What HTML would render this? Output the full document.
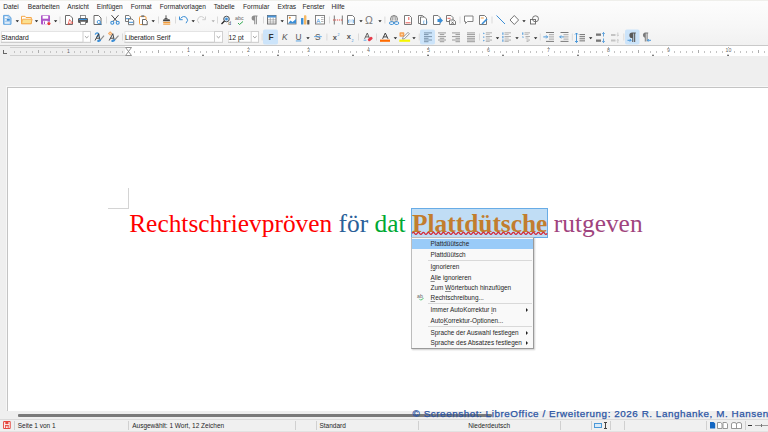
<!DOCTYPE html><html><head><meta charset="utf-8"><style>
*{margin:0;padding:0;box-sizing:border-box}
html,body{width:768px;height:432px;overflow:hidden;background:#efefef;position:relative;font-family:'Liberation Sans',sans-serif}
.abs{position:absolute}
.t{position:absolute;white-space:nowrap;color:#262626;font-size:6.4px;line-height:8px}
svg{position:absolute;overflow:visible}
.sep{position:absolute;width:1px;background:#d6d6d6}
u{text-decoration-color:#8a8a8a;text-decoration-thickness:0.6px;text-underline-offset:0.8px}
</style></head><body>

<div class="abs" style="left:0;top:0;width:768px;height:45px;background:linear-gradient(#fdfdfd,#f7f7f7 60%,#f1f1f1)"></div>
<div class="abs" style="left:0;top:0;width:768px;height:1px;background:#efefeb"></div>
<div class="t" style="left:3.3px;top:2.6px;font-size:6.58px">Datei</div>
<div class="t" style="left:27.8px;top:2.6px;font-size:6.58px">Bearbeiten</div>
<div class="t" style="left:67.3px;top:2.6px;font-size:6.58px">Ansicht</div>
<div class="t" style="left:96.8px;top:2.6px;font-size:6.58px">Einfügen</div>
<div class="t" style="left:130.8px;top:2.6px;font-size:6.58px">Format</div>
<div class="t" style="left:159.8px;top:2.6px;font-size:6.58px">Formatvorlagen</div>
<div class="t" style="left:213.8px;top:2.6px;font-size:6.58px">Tabelle</div>
<div class="t" style="left:243.10000000000002px;top:2.6px;font-size:6.58px">Formular</div>
<div class="t" style="left:277.5px;top:2.6px;font-size:6.58px">Extras</div>
<div class="t" style="left:302.5px;top:2.6px;font-size:6.58px">Fenster</div>
<div class="t" style="left:331.6px;top:2.6px;font-size:6.58px">Hilfe</div>
<div class="abs" style="left:0;top:45px;width:768px;height:1px;background:#c9c9c9"></div>
<div class="abs" style="left:0;top:46px;width:768px;height:10px;background:#efefef"></div>
<div class="abs" style="left:10px;top:47px;width:115px;height:9px;background:#efefef;border-top:1px solid #d0d0d0;border-bottom:1px solid #d0d0d0"></div>
<div class="abs" style="left:125px;top:46px;width:643px;height:10px;background:#fff"></div>
<div class="abs" style="left:14px;top:50.5px;width:1px;height:2px;background:#c4c4c4"></div><div class="abs" style="left:20px;top:50.5px;width:1px;height:2px;background:#c4c4c4"></div><div class="abs" style="left:26px;top:50.5px;width:1px;height:2px;background:#c4c4c4"></div><div class="abs" style="left:32px;top:50.5px;width:1px;height:2px;background:#c4c4c4"></div><div class="abs" style="left:38px;top:50px;width:1px;height:3px;background:#acacac"></div><div class="abs" style="left:44px;top:50.5px;width:1px;height:2px;background:#c4c4c4"></div><div class="abs" style="left:50px;top:50.5px;width:1px;height:2px;background:#c4c4c4"></div><div class="abs" style="left:56px;top:50.5px;width:1px;height:2px;background:#c4c4c4"></div><div class="abs" style="left:62px;top:50.5px;width:1px;height:2px;background:#c4c4c4"></div><div class="abs" style="left:74px;top:50.5px;width:1px;height:2px;background:#c4c4c4"></div><div class="abs" style="left:80px;top:50.5px;width:1px;height:2px;background:#c4c4c4"></div><div class="abs" style="left:86px;top:50.5px;width:1px;height:2px;background:#c4c4c4"></div><div class="abs" style="left:92px;top:50.5px;width:1px;height:2px;background:#c4c4c4"></div><div class="abs" style="left:98px;top:50px;width:1px;height:3px;background:#acacac"></div><div class="abs" style="left:104px;top:50.5px;width:1px;height:2px;background:#c4c4c4"></div><div class="abs" style="left:110px;top:50.5px;width:1px;height:2px;background:#c4c4c4"></div><div class="abs" style="left:116px;top:50.5px;width:1px;height:2px;background:#c4c4c4"></div><div class="abs" style="left:122px;top:50.5px;width:1px;height:2px;background:#c4c4c4"></div><div class="abs" style="left:134px;top:50.5px;width:1px;height:2px;background:#c4c4c4"></div><div class="abs" style="left:140px;top:50.5px;width:1px;height:2px;background:#c4c4c4"></div><div class="abs" style="left:146px;top:50.5px;width:1px;height:2px;background:#c4c4c4"></div><div class="abs" style="left:152px;top:50.5px;width:1px;height:2px;background:#c4c4c4"></div><div class="abs" style="left:158px;top:50px;width:1px;height:3px;background:#acacac"></div><div class="abs" style="left:164px;top:50.5px;width:1px;height:2px;background:#c4c4c4"></div><div class="abs" style="left:170px;top:50.5px;width:1px;height:2px;background:#c4c4c4"></div><div class="abs" style="left:176px;top:50.5px;width:1px;height:2px;background:#c4c4c4"></div><div class="abs" style="left:182px;top:50.5px;width:1px;height:2px;background:#c4c4c4"></div><div class="abs" style="left:194px;top:50.5px;width:1px;height:2px;background:#c4c4c4"></div><div class="abs" style="left:200px;top:50.5px;width:1px;height:2px;background:#c4c4c4"></div><div class="abs" style="left:206px;top:50.5px;width:1px;height:2px;background:#c4c4c4"></div><div class="abs" style="left:212px;top:50.5px;width:1px;height:2px;background:#c4c4c4"></div><div class="abs" style="left:218px;top:50px;width:1px;height:3px;background:#acacac"></div><div class="abs" style="left:224px;top:50.5px;width:1px;height:2px;background:#c4c4c4"></div><div class="abs" style="left:230px;top:50.5px;width:1px;height:2px;background:#c4c4c4"></div><div class="abs" style="left:236px;top:50.5px;width:1px;height:2px;background:#c4c4c4"></div><div class="abs" style="left:242px;top:50.5px;width:1px;height:2px;background:#c4c4c4"></div><div class="abs" style="left:254px;top:50.5px;width:1px;height:2px;background:#c4c4c4"></div><div class="abs" style="left:260px;top:50.5px;width:1px;height:2px;background:#c4c4c4"></div><div class="abs" style="left:266px;top:50.5px;width:1px;height:2px;background:#c4c4c4"></div><div class="abs" style="left:272px;top:50.5px;width:1px;height:2px;background:#c4c4c4"></div><div class="abs" style="left:278px;top:50px;width:1px;height:3px;background:#acacac"></div><div class="abs" style="left:284px;top:50.5px;width:1px;height:2px;background:#c4c4c4"></div><div class="abs" style="left:290px;top:50.5px;width:1px;height:2px;background:#c4c4c4"></div><div class="abs" style="left:296px;top:50.5px;width:1px;height:2px;background:#c4c4c4"></div><div class="abs" style="left:302px;top:50.5px;width:1px;height:2px;background:#c4c4c4"></div><div class="abs" style="left:314px;top:50.5px;width:1px;height:2px;background:#c4c4c4"></div><div class="abs" style="left:320px;top:50.5px;width:1px;height:2px;background:#c4c4c4"></div><div class="abs" style="left:326px;top:50.5px;width:1px;height:2px;background:#c4c4c4"></div><div class="abs" style="left:332px;top:50.5px;width:1px;height:2px;background:#c4c4c4"></div><div class="abs" style="left:338px;top:50px;width:1px;height:3px;background:#acacac"></div><div class="abs" style="left:344px;top:50.5px;width:1px;height:2px;background:#c4c4c4"></div><div class="abs" style="left:350px;top:50.5px;width:1px;height:2px;background:#c4c4c4"></div><div class="abs" style="left:356px;top:50.5px;width:1px;height:2px;background:#c4c4c4"></div><div class="abs" style="left:362px;top:50.5px;width:1px;height:2px;background:#c4c4c4"></div><div class="abs" style="left:374px;top:50.5px;width:1px;height:2px;background:#c4c4c4"></div><div class="abs" style="left:380px;top:50.5px;width:1px;height:2px;background:#c4c4c4"></div><div class="abs" style="left:386px;top:50.5px;width:1px;height:2px;background:#c4c4c4"></div><div class="abs" style="left:392px;top:50.5px;width:1px;height:2px;background:#c4c4c4"></div><div class="abs" style="left:398px;top:50px;width:1px;height:3px;background:#acacac"></div><div class="abs" style="left:404px;top:50.5px;width:1px;height:2px;background:#c4c4c4"></div><div class="abs" style="left:410px;top:50.5px;width:1px;height:2px;background:#c4c4c4"></div><div class="abs" style="left:416px;top:50.5px;width:1px;height:2px;background:#c4c4c4"></div><div class="abs" style="left:422px;top:50.5px;width:1px;height:2px;background:#c4c4c4"></div><div class="abs" style="left:434px;top:50.5px;width:1px;height:2px;background:#c4c4c4"></div><div class="abs" style="left:440px;top:50.5px;width:1px;height:2px;background:#c4c4c4"></div><div class="abs" style="left:446px;top:50.5px;width:1px;height:2px;background:#c4c4c4"></div><div class="abs" style="left:452px;top:50.5px;width:1px;height:2px;background:#c4c4c4"></div><div class="abs" style="left:458px;top:50px;width:1px;height:3px;background:#acacac"></div><div class="abs" style="left:464px;top:50.5px;width:1px;height:2px;background:#c4c4c4"></div><div class="abs" style="left:470px;top:50.5px;width:1px;height:2px;background:#c4c4c4"></div><div class="abs" style="left:476px;top:50.5px;width:1px;height:2px;background:#c4c4c4"></div><div class="abs" style="left:482px;top:50.5px;width:1px;height:2px;background:#c4c4c4"></div><div class="abs" style="left:494px;top:50.5px;width:1px;height:2px;background:#c4c4c4"></div><div class="abs" style="left:500px;top:50.5px;width:1px;height:2px;background:#c4c4c4"></div><div class="abs" style="left:506px;top:50.5px;width:1px;height:2px;background:#c4c4c4"></div><div class="abs" style="left:512px;top:50.5px;width:1px;height:2px;background:#c4c4c4"></div><div class="abs" style="left:518px;top:50px;width:1px;height:3px;background:#acacac"></div><div class="abs" style="left:524px;top:50.5px;width:1px;height:2px;background:#c4c4c4"></div><div class="abs" style="left:530px;top:50.5px;width:1px;height:2px;background:#c4c4c4"></div><div class="abs" style="left:536px;top:50.5px;width:1px;height:2px;background:#c4c4c4"></div><div class="abs" style="left:542px;top:50.5px;width:1px;height:2px;background:#c4c4c4"></div><div class="abs" style="left:554px;top:50.5px;width:1px;height:2px;background:#c4c4c4"></div><div class="abs" style="left:560px;top:50.5px;width:1px;height:2px;background:#c4c4c4"></div><div class="abs" style="left:566px;top:50.5px;width:1px;height:2px;background:#c4c4c4"></div><div class="abs" style="left:572px;top:50.5px;width:1px;height:2px;background:#c4c4c4"></div><div class="abs" style="left:578px;top:50px;width:1px;height:3px;background:#acacac"></div><div class="abs" style="left:584px;top:50.5px;width:1px;height:2px;background:#c4c4c4"></div><div class="abs" style="left:590px;top:50.5px;width:1px;height:2px;background:#c4c4c4"></div><div class="abs" style="left:596px;top:50.5px;width:1px;height:2px;background:#c4c4c4"></div><div class="abs" style="left:602px;top:50.5px;width:1px;height:2px;background:#c4c4c4"></div><div class="abs" style="left:614px;top:50.5px;width:1px;height:2px;background:#c4c4c4"></div><div class="abs" style="left:620px;top:50.5px;width:1px;height:2px;background:#c4c4c4"></div><div class="abs" style="left:626px;top:50.5px;width:1px;height:2px;background:#c4c4c4"></div><div class="abs" style="left:632px;top:50.5px;width:1px;height:2px;background:#c4c4c4"></div><div class="abs" style="left:638px;top:50px;width:1px;height:3px;background:#acacac"></div><div class="abs" style="left:644px;top:50.5px;width:1px;height:2px;background:#c4c4c4"></div><div class="abs" style="left:650px;top:50.5px;width:1px;height:2px;background:#c4c4c4"></div><div class="abs" style="left:656px;top:50.5px;width:1px;height:2px;background:#c4c4c4"></div><div class="abs" style="left:662px;top:50.5px;width:1px;height:2px;background:#c4c4c4"></div><div class="abs" style="left:674px;top:50.5px;width:1px;height:2px;background:#c4c4c4"></div><div class="abs" style="left:680px;top:50.5px;width:1px;height:2px;background:#c4c4c4"></div><div class="abs" style="left:686px;top:50.5px;width:1px;height:2px;background:#c4c4c4"></div><div class="abs" style="left:692px;top:50.5px;width:1px;height:2px;background:#c4c4c4"></div><div class="abs" style="left:698px;top:50px;width:1px;height:3px;background:#acacac"></div><div class="abs" style="left:704px;top:50.5px;width:1px;height:2px;background:#c4c4c4"></div><div class="abs" style="left:710px;top:50.5px;width:1px;height:2px;background:#c4c4c4"></div><div class="abs" style="left:716px;top:50.5px;width:1px;height:2px;background:#c4c4c4"></div><div class="abs" style="left:722px;top:50.5px;width:1px;height:2px;background:#c4c4c4"></div><div class="abs" style="left:734px;top:50.5px;width:1px;height:2px;background:#c4c4c4"></div><div class="abs" style="left:740px;top:50.5px;width:1px;height:2px;background:#c4c4c4"></div><div class="abs" style="left:746px;top:50.5px;width:1px;height:2px;background:#c4c4c4"></div><div class="abs" style="left:752px;top:50.5px;width:1px;height:2px;background:#c4c4c4"></div><div class="abs" style="left:758px;top:50px;width:1px;height:3px;background:#acacac"></div><div class="abs" style="left:764px;top:50.5px;width:1px;height:2px;background:#c4c4c4"></div>
<div class="abs" style="left:185.5px;top:47px;width:6px;text-align:center;font-size:5.2px;line-height:6px;color:#666">1</div><div class="abs" style="left:188px;top:47px;width:1px;height:1px;background:#b0b0b0"></div><div class="abs" style="left:188px;top:55px;width:1px;height:1px;background:#b0b0b0"></div>
<div class="abs" style="left:245.5px;top:47px;width:6px;text-align:center;font-size:5.2px;line-height:6px;color:#666">2</div><div class="abs" style="left:248px;top:47px;width:1px;height:1px;background:#b0b0b0"></div><div class="abs" style="left:248px;top:55px;width:1px;height:1px;background:#b0b0b0"></div>
<div class="abs" style="left:305.5px;top:47px;width:6px;text-align:center;font-size:5.2px;line-height:6px;color:#666">3</div><div class="abs" style="left:308px;top:47px;width:1px;height:1px;background:#b0b0b0"></div><div class="abs" style="left:308px;top:55px;width:1px;height:1px;background:#b0b0b0"></div>
<div class="abs" style="left:365.5px;top:47px;width:6px;text-align:center;font-size:5.2px;line-height:6px;color:#666">4</div><div class="abs" style="left:368px;top:47px;width:1px;height:1px;background:#b0b0b0"></div><div class="abs" style="left:368px;top:55px;width:1px;height:1px;background:#b0b0b0"></div>
<div class="abs" style="left:425.5px;top:47px;width:6px;text-align:center;font-size:5.2px;line-height:6px;color:#666">5</div><div class="abs" style="left:428px;top:47px;width:1px;height:1px;background:#b0b0b0"></div><div class="abs" style="left:428px;top:55px;width:1px;height:1px;background:#b0b0b0"></div>
<div class="abs" style="left:485.5px;top:47px;width:6px;text-align:center;font-size:5.2px;line-height:6px;color:#666">6</div><div class="abs" style="left:488px;top:47px;width:1px;height:1px;background:#b0b0b0"></div><div class="abs" style="left:488px;top:55px;width:1px;height:1px;background:#b0b0b0"></div>
<div class="abs" style="left:545.5px;top:47px;width:6px;text-align:center;font-size:5.2px;line-height:6px;color:#666">7</div><div class="abs" style="left:548px;top:47px;width:1px;height:1px;background:#b0b0b0"></div><div class="abs" style="left:548px;top:55px;width:1px;height:1px;background:#b0b0b0"></div>
<div class="abs" style="left:605.5px;top:47px;width:6px;text-align:center;font-size:5.2px;line-height:6px;color:#666">8</div><div class="abs" style="left:608px;top:47px;width:1px;height:1px;background:#b0b0b0"></div><div class="abs" style="left:608px;top:55px;width:1px;height:1px;background:#b0b0b0"></div>
<div class="abs" style="left:665.5px;top:47px;width:6px;text-align:center;font-size:5.2px;line-height:6px;color:#666">9</div><div class="abs" style="left:668px;top:47px;width:1px;height:1px;background:#b0b0b0"></div><div class="abs" style="left:668px;top:55px;width:1px;height:1px;background:#b0b0b0"></div>
<div class="abs" style="left:725.5px;top:47px;width:6px;text-align:center;font-size:5.2px;line-height:6px;color:#666">10</div><div class="abs" style="left:728px;top:47px;width:1px;height:1px;background:#b0b0b0"></div><div class="abs" style="left:728px;top:55px;width:1px;height:1px;background:#b0b0b0"></div>
<div class="abs" style="left:66px;top:47.5px;width:5px;text-align:center;font-size:5px;line-height:6px;color:#666">1</div>
<div class="abs" style="left:202px;top:54px;width:0;height:0;border-left:1.5px solid transparent;border-right:1.5px solid transparent;border-bottom:2px solid #555"></div>
<div class="abs" style="left:277px;top:54px;width:0;height:0;border-left:1.5px solid transparent;border-right:1.5px solid transparent;border-bottom:2px solid #555"></div>
<div class="abs" style="left:352px;top:54px;width:0;height:0;border-left:1.5px solid transparent;border-right:1.5px solid transparent;border-bottom:2px solid #555"></div>
<div class="abs" style="left:427px;top:54px;width:0;height:0;border-left:1.5px solid transparent;border-right:1.5px solid transparent;border-bottom:2px solid #555"></div>
<div class="abs" style="left:502px;top:54px;width:0;height:0;border-left:1.5px solid transparent;border-right:1.5px solid transparent;border-bottom:2px solid #555"></div>
<div class="abs" style="left:577px;top:54px;width:0;height:0;border-left:1.5px solid transparent;border-right:1.5px solid transparent;border-bottom:2px solid #555"></div>
<div class="abs" style="left:652px;top:54px;width:0;height:0;border-left:1.5px solid transparent;border-right:1.5px solid transparent;border-bottom:2px solid #555"></div>
<div class="abs" style="left:727px;top:54px;width:0;height:0;border-left:1.5px solid transparent;border-right:1.5px solid transparent;border-bottom:2px solid #555"></div>
<div class="abs" style="left:3px;top:50px;width:3.5px;height:3.5px;border-left:1.2px solid #666;border-bottom:1.2px solid #666"></div>
<svg style="left:125px;top:47px" width="7" height="9" viewBox="0 0 7 9"><path d="M0.5 0.5H6.5L3.5 4.5Z M0.5 8.5H6.5L3.5 4.5Z" fill="#fff" stroke="#777" stroke-width="0.8"/></svg>
<div class="abs" style="left:7px;top:87px;width:770px;height:324px;background:#fff;border-left:1px solid #c4c4c4;border-top:1px solid #c4c4c4;box-shadow:-1px -1px 0 #f7f7f7"></div>
<div class="abs" style="left:108px;top:187.5px;width:21px;height:21px;border-right:1px solid #d4d4d4;border-bottom:1px solid #d4d4d4"></div>
<div class="abs" style="left:411px;top:208px;width:137px;height:30px;background:#c0ddf5;border:1px solid #68ace6"></div>
<div class="abs" id="doc" style="left:129.2px;top:208px;font-family:'Liberation Serif',serif;font-size:25.4px;line-height:30px;white-space:nowrap"><span style="color:#ff0000">Rechtschrievpröven</span> <span style="color:#2a6099">för</span> <span style="color:#00a933">dat</span> <span style="color:#c27d2e;font-weight:bold">Plattdütsche</span> <span style="color:#a0447e">rutgeven</span></div>
<svg style="left:0;top:0" width="768" height="432"><path d="M412.15 233.4 Q413.40 231.2 414.65 233.4 Q415.90 235.6 417.15 233.4 Q418.40 231.2 419.65 233.4 Q420.90 235.6 422.15 233.4 Q423.40 231.2 424.65 233.4 Q425.90 235.6 427.15 233.4 Q428.40 231.2 429.65 233.4 Q430.90 235.6 432.15 233.4 Q433.40 231.2 434.65 233.4 Q435.90 235.6 437.15 233.4 Q438.40 231.2 439.65 233.4 Q440.90 235.6 442.15 233.4 Q443.40 231.2 444.65 233.4 Q445.90 235.6 447.15 233.4 Q448.40 231.2 449.65 233.4 Q450.90 235.6 452.15 233.4 Q453.40 231.2 454.65 233.4 Q455.90 235.6 457.15 233.4 Q458.40 231.2 459.65 233.4 Q460.90 235.6 462.15 233.4 Q463.40 231.2 464.65 233.4 Q465.90 235.6 467.15 233.4 Q468.40 231.2 469.65 233.4 Q470.90 235.6 472.15 233.4 Q473.40 231.2 474.65 233.4 Q475.90 235.6 477.15 233.4 Q478.40 231.2 479.65 233.4 Q480.90 235.6 482.15 233.4 Q483.40 231.2 484.65 233.4 Q485.90 235.6 487.15 233.4 Q488.40 231.2 489.65 233.4 Q490.90 235.6 492.15 233.4 Q493.40 231.2 494.65 233.4 Q495.90 235.6 497.15 233.4 Q498.40 231.2 499.65 233.4 Q500.90 235.6 502.15 233.4 Q503.40 231.2 504.65 233.4 Q505.90 235.6 507.15 233.4 Q508.40 231.2 509.65 233.4 Q510.90 235.6 512.15 233.4 Q513.40 231.2 514.65 233.4 Q515.90 235.6 517.15 233.4 Q518.40 231.2 519.65 233.4 Q520.90 235.6 522.15 233.4 Q523.40 231.2 524.65 233.4 Q525.90 235.6 527.15 233.4 Q528.40 231.2 529.65 233.4 Q530.90 235.6 532.15 233.4 Q533.40 231.2 534.65 233.4 Q535.90 235.6 537.15 233.4 Q538.40 231.2 539.65 233.4 Q540.90 235.6 542.15 233.4 Q543.40 231.2 544.65 233.4 Q545.90 235.6 547.15 233.4" fill="none" stroke="#d42a3a" stroke-width="1.2"/></svg>
<div class="abs" style="left:411px;top:237px;width:123px;height:112.2px;background:#f9f9f9;border:1px solid #bdbdbd;border-right-color:#9a9a9a;border-bottom-color:#9a9a9a;box-shadow:1px 1px 1.5px rgba(0,0,0,0.2)"></div>
<div class="abs" style="left:412px;top:238.8px;width:121px;height:10.1px;background:#99cbf8"></div>
<div class="t" style="left:430.5px;top:240.4px;color:#262626">Plattdüütsche</div>
<div class="t" style="left:430.5px;top:250.6px;color:#262626">Plattdüütsch</div>
<div class="t" style="left:430.5px;top:263.0px;color:#262626"><u>I</u>gnorieren</div>
<div class="t" style="left:430.5px;top:273.7px;color:#262626"><u>A</u>lle ignorieren</div>
<div class="t" style="left:430.5px;top:283.79999999999995px;color:#262626">Zum <u>W</u>örterbuch hinzufügen</div>
<div class="t" style="left:430.5px;top:294.4px;color:#262626"><u>R</u>echtschreibung...</div>
<div class="t" style="left:430.5px;top:306.4px;color:#262626">Immer AutoKorrektur <u>i</u>n</div>
<div class="t" style="left:430.5px;top:317.0px;color:#262626">Auto<u>K</u>orrektur-Optionen...</div>
<div class="t" style="left:430.5px;top:328.9px;color:#262626">Sprache der Auswahl festlegen</div>
<div class="t" style="left:430.5px;top:339.2px;color:#262626">Sprache des Absatzes festlegen</div>
<div class="abs" style="left:428px;top:260px;width:104px;height:1px;background:#d9d9d9"></div>
<div class="abs" style="left:428px;top:303px;width:104px;height:1px;background:#d9d9d9"></div>
<div class="abs" style="left:428px;top:326px;width:104px;height:1px;background:#d9d9d9"></div>
<div class="abs" style="left:526px;top:308px;width:0;height:0;border-top:2px solid transparent;border-bottom:2px solid transparent;border-left:2.5px solid #222"></div>
<div class="abs" style="left:526px;top:330.5px;width:0;height:0;border-top:2px solid transparent;border-bottom:2px solid transparent;border-left:2.5px solid #222"></div>
<div class="abs" style="left:526px;top:340.8px;width:0;height:0;border-top:2px solid transparent;border-bottom:2px solid transparent;border-left:2.5px solid #222"></div>
<div class="t" style="left:417px;top:291.8px;font-size:5.2px;color:#666">ab</div>
<svg style="left:418.8px;top:297.8px" width="5" height="3" viewBox="0 0 5 3"><path d="M0.3 0.8L1.7 2.2L4.6 0.3" fill="none" stroke="#4cc06a" stroke-width="0.9"/></svg>
<div class="abs" style="left:0;top:411px;width:768px;height:7px;background:#efefef"></div>
<div class="abs" style="left:18px;top:413.5px;width:474px;height:3px;background:#7a7a7a;border-radius:1px"></div>
<div class="abs" style="left:0;top:419px;width:768px;height:13px;background:#f0f0f0;border-top:1px solid #dadada"></div>
<div class="sep" style="left:13.5px;top:421px;height:8.5px;background:#d0d0d0"></div>
<div class="sep" style="left:127.5px;top:421px;height:8.5px;background:#d0d0d0"></div>
<div class="sep" style="left:294.7px;top:421px;height:8.5px;background:#d0d0d0"></div>
<div class="sep" style="left:315.5px;top:421px;height:8.5px;background:#d0d0d0"></div>
<div class="sep" style="left:417.7px;top:421px;height:8.5px;background:#d0d0d0"></div>
<div class="sep" style="left:559.8px;top:421px;height:8.5px;background:#d0d0d0"></div>
<div class="sep" style="left:590.8px;top:421px;height:8.5px;background:#d0d0d0"></div>
<div class="sep" style="left:610px;top:421px;height:8.5px;background:#d0d0d0"></div>
<div class="sep" style="left:624px;top:421px;height:8.5px;background:#d0d0d0"></div>
<div class="sep" style="left:705.7px;top:421px;height:8.5px;background:#d0d0d0"></div>
<div class="sep" style="left:744.8px;top:421px;height:8.5px;background:#d0d0d0"></div>
<div class="t" style="left:17.7px;top:421.8px;font-size:6.5px">Seite 1 von 1</div>
<div class="t" style="left:132.2px;top:421.8px;font-size:6.5px">Ausgewählt: 1 Wort, 12 Zeichen</div>
<div class="t" style="left:319.4px;top:421.8px;font-size:6.5px">Standard</div>
<div class="t" style="left:468.2px;top:421.8px;font-size:6.5px">Niederdeutsch</div>
<svg style="left:3px;top:421px" width="8" height="8" viewBox="0 0 8 8"><rect x="0.1" y="0.1" width="7.6" height="7.9" rx="1" fill="#e5463e"/><rect x="1.1" y="1" width="5.6" height="6.1" rx="0.4" fill="#fff"/><rect x="2.3" y="1" width="3.2" height="2.2" fill="#e5463e"/><rect x="2.2" y="4.1" width="3.4" height="1.2" fill="#e5463e"/><rect x="2.2" y="4.1" width="0.9" height="3" fill="#e5463e"/><rect x="4.7" y="4.1" width="0.9" height="3" fill="#e5463e"/></svg>
<div class="abs" style="left:594px;top:422.5px;width:8px;height:5px;border:1px solid #4a98d8;background:#d8eaf8"></div>
<div class="abs" style="left:605px;top:421.5px;width:1px;height:7px;background:#444"></div><div class="abs" style="left:604px;top:421.5px;width:3px;height:1px;background:#444"></div><div class="abs" style="left:604px;top:428px;width:3px;height:1px;background:#444"></div>
<svg style="left:0;top:0" width="768" height="432"><path d="M710 422h3.6l1.6 1.6v5h-5.2z" fill="#1467c2"/><path d="M717.5 422.5h3.2l1.3 1.3v4.7h-4.5z M723 422.5h3.2l1.3 1.3v4.7h-4.5z" fill="#fff" stroke="#8c8c8c" stroke-width="0.9"/><path d="M731.5 428.5v-4.5q0-1.5 2.5-1.5q2.5 0 2.5 1.5q0-1.5 2.5-1.5q2.5 0 2.5 1.5v4.5z M736.5 423.8v4.7" fill="#fff" stroke="#8c8c8c" stroke-width="0.9"/></svg>
<div class="abs" style="left:748px;top:424.5px;width:4px;height:1px;background:#333"></div>
<div class="abs" style="left:755px;top:425px;width:13px;height:1px;background:#999"></div><div class="abs" style="left:761px;top:423.5px;width:1px;height:3px;background:#777"></div>
<div class="abs" style="left:0;top:431px;width:768px;height:1px;background:#e2e2e2"></div>
<div class="abs" id="wm" style="left:412.6px;top:407.8px;font-family:'Liberation Sans',sans-serif;font-size:9.85px;line-height:12px;color:#2a54a4;white-space:nowrap;letter-spacing:0.555px;-webkit-text-stroke:0.25px #2a54a4">© Screenshot: LibreOffice / Erweiterung: 2026 R. Langhanke, M. Hansen</div>
<svg style="left:0;top:0" width="768" height="46" viewBox="0 0 768 46"><path d="M3.6 15.4h5.1l2.3 2.3v6.6h-7.4z" fill="#a9cdee" stroke="#62a5e0" stroke-width="1"/><rect x="4.9" y="16.5" width="2.6" height="1.5" fill="#fff"/><rect x="4.9" y="19.3" width="1.5" height="1.2" fill="#fff"/><rect x="7" y="19" width="2.7" height="1.6" fill="#3b8ed6"/><rect x="4.9" y="22.4" width="4.8" height="1.1" fill="#fff"/><path d="M15.6 20.3h3.4l-1.7 2z" fill="#222"/><path d="M21.5 16.3h3.5l1 1.2h5.3v6.2h-9.8z" fill="#fff" stroke="#f5a84a" stroke-width="1"/><path d="M21.5 23.7l1.2-4.5h9.4l-1 4.5z" fill="#fbe08f" stroke="#f5a84a" stroke-width="0.9"/><path d="M34.8 20.3h3.4l-1.7 2z" fill="#222"/><rect x="41" y="15.2" width="9" height="9.3" rx="0.9" fill="#ad55c8"/><rect x="42.6" y="15.8" width="5.6" height="2.9" fill="#fff"/><rect x="43.1" y="20.8" width="4.6" height="3.7" fill="#fff"/><rect x="44" y="21.5" width="1" height="2.5" fill="#ad55c8"/><circle cx="48.9" cy="23.6" r="2.2" fill="#fff"/><circle cx="48.9" cy="23.6" r="1.6" fill="#e23c3c"/><path d="M53.9 20.3h3.4l-1.7 2z" fill="#222"/><rect x="59.5" y="16.5" width="1" height="7.0" fill="#dadada"/><path d="M65.5 15.5h4.5l2.5 2.5v6.5h-7z" fill="#fff" stroke="#6b6b6b" stroke-width="1"/><path d="M68 24.5q1-3 1.6-5q0.6 2 3.4 3.5q-3 -0.3 -5 1.5" fill="none" stroke="#e5473f" stroke-width="0.8"/><rect x="80.5" y="15.5" width="5" height="3" fill="#fff" stroke="#777" stroke-width="0.8"/><rect x="78" y="18" width="10" height="5" rx="1.2" fill="#5a5a5a"/><rect x="79" y="18.8" width="8" height="1.2" fill="#3b8ed6"/><rect x="80.5" y="21.5" width="5" height="3" fill="#fff" stroke="#777" stroke-width="0.8"/><path d="M94 15.5h4.5l2.5 2.5v6.5h-7z" fill="#fff" stroke="#6b6b6b" stroke-width="1"/><circle cx="98.8" cy="22" r="1.6" fill="none" stroke="#3b8ed6" stroke-width="0.9"/><path d="M100 23.2l1.8 1.5" stroke="#3b8ed6" stroke-width="0.9"/><rect x="106" y="16.5" width="1" height="7.0" fill="#dadada"/><path d="M111.5 15.2l5.5 6.3M118.5 15.2l-5.5 6.3" stroke="#333" stroke-width="0.9"/><circle cx="112.3" cy="22.8" r="1.5" fill="none" stroke="#3b8ed6" stroke-width="1.1"/><circle cx="117.7" cy="22.8" r="1.5" fill="none" stroke="#3b8ed6" stroke-width="1.1"/><path d="M125.5 15.5h3.5l1.5 1.5v4.5h-5z" fill="#fff" stroke="#6b6b6b" stroke-width="0.9"/><rect x="126" y="18.2" width="4" height="1" fill="#3b8ed6"/><path d="M128.5 19h3.5l1.7 1.7v4h-5.2z" fill="#fff" stroke="#6b6b6b" stroke-width="0.9"/><rect x="129" y="21.8" width="4.2" height="1" fill="#3b8ed6"/><rect x="139.5" y="16.5" width="6.5" height="8" rx="1" fill="#fff" stroke="#f29b38" stroke-width="1"/><rect x="141.3" y="15.3" width="3" height="1.8" fill="#777"/><path d="M142.5 19.5h3l1.7 1.7v3.5h-4.7z" fill="#fff" stroke="#555" stroke-width="0.9"/><path d="M151.5 20.3h3.4l-1.7 2z" fill="#222"/><rect x="158" y="16.5" width="1" height="7.0" fill="#dadada"/><path d="M166 15.3v3M164.5 18.5h3" stroke="#555" stroke-width="1"/><path d="M163.5 19.3h6l0.7 2h-7.4z" fill="#444"/><rect x="163.2" y="21.8" width="7" height="1.2" fill="#f29b38"/><rect x="163.2" y="23.5" width="7" height="1.2" fill="#f29b38"/><rect x="175" y="16.5" width="1" height="7.0" fill="#dadada"/><path d="M180.5 18.5q3-3.5 6-0.8q2.5 2.5 -0.5 5.5" fill="none" stroke="#3b8ed6" stroke-width="1"/><path d="M179.5 16.5v3.2h3.2" fill="none" stroke="#3b8ed6" stroke-width="1"/><path d="M191.5 20.3h3.4l-1.7 2z" fill="#222"/><path d="M204.5 18.5q-3-3.5 -6-0.8q-2.5 2.5 0.5 5.5" fill="none" stroke="#cfcfcf" stroke-width="1"/><path d="M205.5 16.5v3.2h-3.2" fill="none" stroke="#cfcfcf" stroke-width="1"/><path d="M211.5 20.3h3.4l-1.7 2z" fill="#b0b0b0"/><rect x="217" y="16.5" width="1" height="7.0" fill="#dadada"/><circle cx="226.5" cy="19" r="2.8" fill="#cde3f7" stroke="#444" stroke-width="0.9"/><circle cx="226.5" cy="19" r="1.3" fill="#3b8ed6"/><path d="M224.5 21l-3 3" stroke="#222" stroke-width="1.2"/><text x="228.2" y="24.6" font-size="5" font-family="Liberation Sans" fill="#444">d</text><text x="235" y="19.6" font-size="5.3" font-family="Liberation Sans" fill="#666">abc</text><path d="M238 23l1.5 1.5l3.5-3" fill="none" stroke="#2fa84f" stroke-width="1"/><path d="M254.2 15.4h3.3v1h-0.6v7.8h-1v-7.8h-0.7v7.8h-1v-3.6a2.6 2.6 0 0 1 0-5.2z" fill="#8c8c8c"/><rect x="263" y="16.5" width="1" height="7.0" fill="#dadada"/><rect x="267.5" y="15.5" width="8.5" height="8.5" fill="#fff" stroke="#666" stroke-width="0.9"/><rect x="267.5" y="15.5" width="8.5" height="2" fill="#4a93d6"/><path d="M267.5 19.8h8.5M267.5 22h8.5M270.3 17.5v6.5M273.2 17.5v6.5" stroke="#888" stroke-width="0.6"/><path d="M280.5 20.3h3.4l-1.7 2z" fill="#222"/><rect x="287.5" y="15.5" width="8.5" height="8.5" fill="#fff" stroke="#777" stroke-width="0.9"/><path d="M288 23.5l2.5-3l2 1.5l3.5-3v4.5z" fill="#3b8ed6"/><circle cx="289.8" cy="17.8" r="1" fill="#f29b38"/><rect x="301" y="18" width="2.4" height="6.5" rx="0.6" fill="#3b8ed6"/><rect x="304" y="15.3" width="2.4" height="9.2" rx="0.6" fill="#f6b964"/><rect x="307.2" y="20" width="2.2" height="4.5" rx="0.6" fill="#555"/><rect x="315.5" y="15.5" width="9" height="8.5" fill="#fff" stroke="#777" stroke-width="0.9"/><text x="316.3" y="22.5" font-size="6" font-family="Liberation Sans" fill="#3b8ed6">A</text><path d="M321 17.5h2.5M321 19.5h2.5M321 21.5h2.5" stroke="#999" stroke-width="0.7"/><rect x="329" y="16.5" width="1" height="7.0" fill="#dadada"/><path d="M334.3 15.5v9M342.3 15.5v9" stroke="#777" stroke-width="1"/><path d="M333 20h10" stroke="#e5473f" stroke-width="1" stroke-dasharray="1.2 0.8"/><path d="M347.5 15.5h5l2 2v7h-7z" fill="#fff" stroke="#6b6b6b" stroke-width="0.9"/><rect x="348" y="19.5" width="6" height="3" fill="#d5e7f7"/><path d="M349.3 19.8q-0.8 0 -0.8 0.8v0.5l-0.4 0.3l0.4 0.3v0.5q0 0.8 0.8 0.8M352.7 19.8q0.8 0 0.8 0.8v0.5l0.4 0.3l-0.4 0.3v0.5q0 0.8 -0.8 0.8" fill="none" stroke="#3b8ed6" stroke-width="0.6"/><path d="M359.3 20.3h3.4l-1.7 2z" fill="#222"/><text x="365" y="24" font-size="10.5" font-family="Liberation Sans" fill="#777">Ω</text><path d="M378.3 20.3h3.4l-1.7 2z" fill="#222"/><rect x="384.4" y="16.5" width="1" height="7.0" fill="#dadada"/><circle cx="394" cy="19" r="3.5" fill="#fff" stroke="#6a6a6a" stroke-width="0.8"/><path d="M390.5 19h7M391.2 17h5.6" stroke="#777" stroke-width="0.55"/><ellipse cx="394" cy="19" rx="1.4" ry="3.5" fill="none" stroke="#777" stroke-width="0.55"/><rect x="389.5" y="21.8" width="4.2" height="2.6" rx="1.3" fill="#fff" stroke="#3b8ed6" stroke-width="1"/><rect x="394.5" y="21.8" width="4.2" height="2.6" rx="1.3" fill="#fff" stroke="#3b8ed6" stroke-width="1"/><path d="M404.5 15.5h5l2 2v7h-7z" fill="#fff" stroke="#6b6b6b" stroke-width="0.9"/><path d="M408.8 17v3" stroke="#e5473f" stroke-width="0.9"/><path d="M405.5 22.8h5" stroke="#e5473f" stroke-width="0.9"/><path d="M418.5 15.5h4l2 2v6h-6z" fill="#fff" stroke="#6b6b6b" stroke-width="0.9"/><path d="M420.5 17h4l2 2v5.5h-6z" fill="#fff" stroke="#6b6b6b" stroke-width="0.9"/><path d="M424 20.5q-0.8 2 0 3.5M426.5 20.5q0.8 2 0 3.5" fill="none" stroke="#3b8ed6" stroke-width="0.7"/><path d="M433.5 15.5h4.5l2 2v7h-6.5z" fill="#fff" stroke="#6b6b6b" stroke-width="0.9"/><path d="M437.5 19h2.5v-1.5l3 3l-3 3v-1.5h-2.5z" fill="#3b8ed6"/><path d="M446.5 15.5h4.5l2 2v4h-6.5z" fill="#fff" stroke="#6b6b6b" stroke-width="0.9"/><path d="M447.5 18.3h3" stroke="#e5473f" stroke-width="0.9"/><path d="M449.5 20h4.5l1.5 1.5v3h-6z" fill="#fff" stroke="#6b6b6b" stroke-width="0.9"/><path d="M451.3 21.5l2.5 2.5M453.8 21.5l-2.5 2.5" stroke="#333" stroke-width="0.6"/><rect x="459.5" y="16.5" width="1" height="7.0" fill="#dadada"/><path d="M464.5 16h8.5v5.5h-5.5l-2 2v-2h-1z" fill="#fff" stroke="#777" stroke-width="0.9" stroke-linejoin="round"/><path d="M479.5 15.5h5l2 2v7h-7z" fill="#fff" stroke="#6b6b6b" stroke-width="0.9"/><path d="M480.8 18h3" stroke="#f29b38" stroke-width="0.9"/><path d="M482 24l5-5" stroke="#3b8ed6" stroke-width="1.6"/><rect x="491.5" y="16.5" width="1" height="7.0" fill="#dadada"/><path d="M496.5 15.5l8.5 8.5" stroke="#3b8ed6" stroke-width="1"/><path d="M514.3 15.5l4.3 4.5l-4.3 4.5l-4.3-4.5z" fill="#fff" stroke="#666" stroke-width="0.9"/><path d="M522.3 20.3h3.4l-1.7 2z" fill="#222"/><rect x="530.5" y="19.5" width="5" height="4.5" fill="#fff" stroke="#666" stroke-width="0.9"/><circle cx="535.5" cy="18.8" r="3" fill="none" stroke="#666" stroke-width="0.9"/><rect x="1.5" y="31.5" width="89" height="10.8" fill="#fff" stroke="#e4e4e4" stroke-width="1"/><path d="M1 42.3h90" stroke="#bcbcbc" stroke-width="0.8"/><rect x="83.0" y="31.5" width="7.5" height="10.8" fill="#fff" stroke="#d0d0d0" stroke-width="1"/><path d="M84.95 36.2l1.8 1.6l1.8-1.6" fill="none" stroke="#777" stroke-width="0.7"/><rect x="124.9" y="31.5" width="97.6" height="10.8" fill="#fff" stroke="#e4e4e4" stroke-width="1"/><path d="M124.4 42.3h98.6" stroke="#bcbcbc" stroke-width="0.8"/><rect x="214.5" y="31.5" width="8" height="10.8" fill="#fff" stroke="#d0d0d0" stroke-width="1"/><path d="M216.7 36.2l1.8 1.6l1.8-1.6" fill="none" stroke="#777" stroke-width="0.7"/><rect x="228.5" y="31.5" width="30" height="10.8" fill="#fff" stroke="#e4e4e4" stroke-width="1"/><path d="M228 42.3h31" stroke="#bcbcbc" stroke-width="0.8"/><rect x="251.2" y="31.5" width="7.300000000000011" height="10.8" fill="#fff" stroke="#d0d0d0" stroke-width="1"/><path d="M253.04999999999998 36.2l1.8 1.6l1.8-1.6" fill="none" stroke="#777" stroke-width="0.7"/><path d="M95.4 34.8a1.7 1.7 0 1 1 1.2 1.5" fill="none" stroke="#4a9be0" stroke-width="1.3"/><path d="M95 40.5L98.6 33.7L100 40M96.3 38.2h3" fill="none" stroke="#333" stroke-width="0.9"/><path d="M100.3 40.2L104 35.6" stroke="#8a8a8a" stroke-width="1.1"/><ellipse cx="99.1" cy="40.6" rx="2.1" ry="1.1" fill="#3b8ed6" transform="rotate(-20 99.1 40.6)"/><rect x="108.6" y="32" width="3.2" height="3.2" fill="#f6a55a" transform="rotate(45 110.2 33.6)"/><rect x="109.5" y="32.9" width="1.4" height="1.4" fill="#fde0c0"/><path d="M109.2 40.5L112.8 33.7L114.2 40M110.5 38.2h3" fill="none" stroke="#333" stroke-width="0.9"/><path d="M114.5 40.2L118.5 35.6" stroke="#8a8a8a" stroke-width="1.1"/><ellipse cx="113.2" cy="40.6" rx="2.1" ry="1.1" fill="#3b8ed6" transform="rotate(-20 113.2 40.6)"/><rect x="122" y="33.5" width="1" height="7.0" fill="#dadada"/><rect x="261.6" y="33.5" width="1" height="7.0" fill="#dadada"/><rect x="263" y="29.5" width="15" height="15" rx="1.8" fill="#cce4fa"/><text x="268.5" y="39.8" font-size="8.3" font-family="Liberation Sans" font-weight="bold" fill="#333">F</text><text x="282" y="39.8" font-size="8.3" font-family="Liberation Sans" font-style="italic" fill="#555">K</text><text x="295.5" y="39.8" font-size="8.3" font-family="Liberation Sans" fill="#555">U</text><rect x="295.8" y="40.5" width="5.5" height="0.9" fill="#4a9be0"/><path d="M306.3 37.3h3.4l-1.7 2z" fill="#222"/><text x="315" y="39.8" font-size="8.3" font-family="Liberation Sans" fill="#555">S</text><rect x="314" y="36.3" width="7.8" height="0.8" fill="#4a9be0"/><rect x="326.4" y="33.5" width="1" height="7.0" fill="#dadada"/><text x="332.8" y="39.8" font-size="7.5" font-family="Liberation Sans" font-weight="bold" fill="#555">x</text><text x="337.5" y="35.6" font-size="3.6" font-family="Liberation Sans" fill="#3b8ed6">2</text><text x="346.8" y="39.3" font-size="7.5" font-family="Liberation Sans" font-weight="bold" fill="#555">x</text><text x="351.5" y="42" font-size="3.6" font-family="Liberation Sans" fill="#3b8ed6">2</text><rect x="358" y="33.5" width="1" height="7.0" fill="#dadada"/><path d="M364.6 38.8L367.3 33L369.6 38.8M365.6 36.9h3.2" fill="none" stroke="#555" stroke-width="0.9"/><rect x="363.6" y="39.7" width="2.8" height="0.9" fill="#4a9be0"/><rect x="367.6" y="37.6" width="5.2" height="2.8" rx="1.2" fill="#e53a48" transform="rotate(-40 370.2 39)"/><rect x="376" y="33.5" width="1" height="7.0" fill="#dadada"/><path d="M382.6 38.8L385.3 33L388 38.8M383.6 36.9h3.4" fill="none" stroke="#444" stroke-width="1"/><rect x="380" y="39.6" width="10" height="2.2" fill="#ff6b00"/><path d="M393.7 37.3h3.4l-1.7 2z" fill="#222"/><rect x="399.5" y="32.2" width="4.8" height="4.6" rx="0.8" fill="#f5a050"/><path d="M400.8 34.5h2.2M401.9 33.4v2.2" stroke="#fde2c6" stroke-width="0.6"/><path d="M402.6 39.2l0.4-1.8l5-5l1.4 1.4l-5 5z" fill="#fff" stroke="#666" stroke-width="0.7"/><rect x="399.3" y="39.6" width="10.8" height="2.2" fill="#f5f500"/><path d="M412.3 37.3h3.4l-1.7 2z" fill="#222"/><rect x="418.75" y="33.5" width="1" height="7.0" fill="#dadada"/><rect x="420" y="29.5" width="15" height="15" rx="1.8" fill="#cce4fa"/><rect x="424" y="32.4" width="8" height="1" fill="#7a93ab"/><rect x="424" y="34.1" width="4.5" height="1" fill="#7a93ab"/><rect x="424" y="36.1" width="8" height="1" fill="#7a93ab"/><rect x="424" y="37.8" width="4.5" height="1" fill="#7a93ab"/><rect x="424" y="39.5" width="8" height="1" fill="#7a93ab"/><rect x="424" y="41.2" width="4.5" height="1" fill="#7a93ab"/><rect x="438" y="32.4" width="8" height="1" fill="#9a9a9a"/><rect x="439.75" y="34.1" width="4.5" height="1" fill="#9a9a9a"/><rect x="438" y="36.1" width="8" height="1" fill="#9a9a9a"/><rect x="439.75" y="37.8" width="4.5" height="1" fill="#9a9a9a"/><rect x="438" y="39.5" width="8" height="1" fill="#9a9a9a"/><rect x="439.75" y="41.2" width="4.5" height="1" fill="#9a9a9a"/><rect x="452" y="32.4" width="8" height="1" fill="#9a9a9a"/><rect x="455.5" y="34.1" width="4.5" height="1" fill="#9a9a9a"/><rect x="452" y="36.1" width="8" height="1" fill="#9a9a9a"/><rect x="455.5" y="37.8" width="4.5" height="1" fill="#9a9a9a"/><rect x="452" y="39.5" width="8" height="1" fill="#9a9a9a"/><rect x="455.5" y="41.2" width="4.5" height="1" fill="#9a9a9a"/><rect x="467" y="32.4" width="8" height="1" fill="#9a9a9a"/><rect x="467" y="34.1" width="8" height="1" fill="#9a9a9a"/><rect x="467" y="36.1" width="8" height="1" fill="#9a9a9a"/><rect x="467" y="37.8" width="8" height="1" fill="#9a9a9a"/><rect x="467" y="39.5" width="8" height="1" fill="#9a9a9a"/><rect x="467" y="41.2" width="8" height="1" fill="#9a9a9a"/><rect x="479" y="33.5" width="1" height="7.0" fill="#dadada"/><path d="M483.3 32.6l1.5 0.8l-1.5 0.8z M483.3 36.3l1.5 0.8l-1.5 0.8z M483.3 39.8l1.5 0.8l-1.5 0.8z" fill="#3b8ed6"/><rect x="485.8" y="32.4" width="6.2" height="0.9" fill="#a6a6a6"/><rect x="485.8" y="33.9" width="4" height="0.9" fill="#b5b5b5"/><rect x="485.8" y="36.1" width="6.2" height="0.9" fill="#a6a6a6"/><rect x="485.8" y="37.6" width="4" height="0.9" fill="#b5b5b5"/><rect x="485.8" y="39.6" width="6.2" height="0.9" fill="#a6a6a6"/><rect x="485.8" y="41.1" width="4" height="0.9" fill="#b5b5b5"/><path d="M495.8 37.3h3.4l-1.7 2z" fill="#222"/><rect x="502.4" y="32.4" width="1" height="2.4" fill="#3b8ed6"/><rect x="502.4" y="35.9" width="1" height="2.4" fill="#3b8ed6"/><rect x="502.4" y="39.4" width="1" height="2.4" fill="#3b8ed6"/><rect x="504.5" y="32.4" width="6.5" height="0.9" fill="#a6a6a6"/><rect x="504.5" y="33.9" width="4.2" height="0.9" fill="#b5b5b5"/><rect x="504.5" y="36.1" width="6.5" height="0.9" fill="#a6a6a6"/><rect x="504.5" y="37.6" width="4.2" height="0.9" fill="#b5b5b5"/><rect x="504.5" y="39.6" width="6.5" height="0.9" fill="#a6a6a6"/><rect x="504.5" y="41.1" width="4.2" height="0.9" fill="#b5b5b5"/><path d="M515.3 37.3h3.4l-1.7 2z" fill="#222"/><rect x="522.3" y="32.4" width="1" height="2.4" fill="#3b8ed6"/><path d="M522.5 36l1.5 1.2l-1.5 0.5z" fill="#3b8ed6"/><rect x="524.5" y="32.4" width="5.5" height="0.9" fill="#a6a6a6"/><rect x="524.5" y="33.9" width="4" height="0.9" fill="#b5b5b5"/><rect x="525.5" y="36.1" width="4.5" height="0.9" fill="#a6a6a6"/><rect x="525.5" y="37.6" width="3" height="0.9" fill="#b5b5b5"/><rect x="526.5" y="39.6" width="3.5" height="0.9" fill="#a6a6a6"/><rect x="526.5" y="41.1" width="2" height="0.9" fill="#b5b5b5"/><path d="M533.9 37.3h3.4l-1.7 2z" fill="#222"/><rect x="539.75" y="33.5" width="1" height="7.0" fill="#dadada"/><rect x="546" y="32" width="8" height="1" fill="#7a7a7a"/><rect x="549" y="34.2" width="5" height="1" fill="#a8a8a8"/><rect x="549" y="36.4" width="5" height="1" fill="#a8a8a8"/><rect x="549" y="38.6" width="5" height="1" fill="#a8a8a8"/><rect x="546" y="40.9" width="8" height="1" fill="#7a7a7a"/><path d="M543.3 36.9h4M546.2 35.4l1.5 1.5l-1.5 1.5" fill="none" stroke="#3b8ed6" stroke-width="0.9"/><rect x="560.5" y="32" width="8" height="1" fill="#7a7a7a"/><rect x="563.5" y="34.2" width="5" height="1" fill="#a8a8a8"/><rect x="563.5" y="36.4" width="5" height="1" fill="#a8a8a8"/><rect x="563.5" y="38.6" width="5" height="1" fill="#a8a8a8"/><rect x="560.5" y="40.9" width="8" height="1" fill="#7a7a7a"/><path d="M563.8 36.9h-4M561.2 35.4l-1.5 1.5l1.5 1.5" fill="none" stroke="#3b8ed6" stroke-width="0.9"/><rect x="571.8" y="33.5" width="1" height="7.0" fill="#dadada"/><path d="M576.5 33v9.5M575 34.5l1.5-1.5l1.5 1.5M575 41l1.5 1.5l1.5-1.5" fill="none" stroke="#3b8ed6" stroke-width="0.9"/><rect x="579.5" y="34.0" width="5.5" height="1.1" fill="#7d7d7d"/><rect x="579.5" y="36.1" width="5.5" height="1.1" fill="#7d7d7d"/><rect x="579.5" y="38.2" width="5.5" height="1.1" fill="#7d7d7d"/><rect x="579.5" y="40.3" width="5.5" height="1.1" fill="#7d7d7d"/><path d="M589 37.3h3.4l-1.7 2z" fill="#222"/><rect x="596" y="33.5" width="5" height="2.3" fill="#777"/><rect x="596" y="39.5" width="5" height="2.3" fill="#777"/><path d="M603.5 32.5v4M602.2 33.8l1.3-1.3l1.3 1.3M603.5 38.5v4M602.2 41.2l1.3 1.3l1.3-1.3" fill="none" stroke="#3b8ed6" stroke-width="0.8"/><rect x="611" y="34" width="4.5" height="2" fill="#c4c4c4"/><rect x="611" y="39.5" width="4.5" height="2" fill="#c4c4c4"/><path d="M617.8 32.5v3.5M616.7 35l1.1 1l1.1-1M617.8 43v-3.5M616.7 40.5l1.1-1l1.1 1" fill="none" stroke="#c4c4c4" stroke-width="0.8"/><rect x="623.3" y="33.5" width="1" height="7.0" fill="#dadada"/><rect x="625" y="29.5" width="14.5" height="15" rx="1.8" fill="#cce4fa"/><path d="M632.2 32.4h3.6v1h-0.6v8.5h-1.1v-8.5h-0.8v8.5h-1.1v-3.8a2.85 2.85 0 0 1 0-5.7z" fill="#5a5a5a"/><path d="M627.5 40.3h3.5M629.8 39l1.3 1.3l-1.3 1.3" fill="none" stroke="#3b8ed6" stroke-width="0.9"/><path d="M644.7 32.4h3.5v1h-0.6v8h-1v-8h-0.8v8h-1v-3.7a2.8 2.8 0 0 1 0-5.3z" fill="#7a7a7a"/><path d="M651 40.3h-3.5M648.8 39l-1.3 1.3l1.3 1.3" fill="none" stroke="#3b8ed6" stroke-width="0.9"/></svg>
<div class="t" style="left:1.3px;top:33.6px;font-size:6.75px;color:#202020">Standard</div>
<div class="t" style="left:124.9px;top:33.6px;font-size:6.75px;color:#202020">Liberation Serif</div>
<div class="t" style="left:228.5px;top:33.6px;font-size:6.75px;color:#202020">12 pt</div>
</body></html>
